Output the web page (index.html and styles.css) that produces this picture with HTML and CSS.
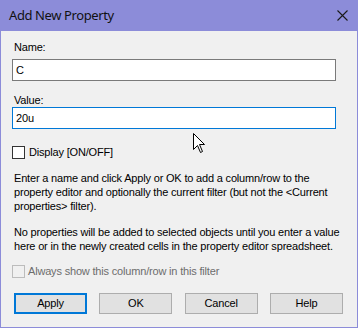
FILE: index.html
```html
<!DOCTYPE html>
<html>
<head>
<meta charset="utf-8">
<link rel="stylesheet" href="styles.css">
</head>
<body>
<div class="window">
  <div class="titlebar">
    <span class="title">Add New Property</span>
    <svg class="close" width="11" height="11" viewBox="0 0 11 11"><path d="M0.5 0.5 L10.5 10.5 M10.5 0.5 L0.5 10.5" stroke="#1a1a1a" stroke-width="1.1" fill="none"/></svg>
  </div>
  <div class="content">
    <div class="label">Name:</div>
    <div class="field">C</div>
    <div class="label value-label">Value:</div>
    <div class="field focused">20u</div>
    <div class="check-row display-row"><span class="box"></span><span class="check-text">Display [ON/OFF]</span></div>
    <p class="note first">Enter a name and click Apply or OK to add a column/row to the<br>property editor and optionally the current filter (but not the &lt;Current<br>properties&gt; filter).</p>
    <p class="note second">No properties will be added to selected objects until you enter a value<br>here or in the newly created cells in the property editor spreadsheet.</p>
    <div class="check-row disabled"><span class="box"></span><span class="check-text">Always show this column/row in this filter</span></div>
    <div class="buttons">
      <div class="btn default">Apply</div>
      <div class="btn">OK</div>
      <div class="btn">Cancel</div>
      <div class="btn">Help</div>
    </div>
  </div>
  <svg class="cursor" width="13" height="21" viewBox="0 0 13 21"><path d="M0.5 0.5 L0.5 16.5 L4.5 12.5 L7.5 19.5 L9.5 18.5 L6.5 11.5 L11.5 11.5 Z" fill="#fff" stroke="#000" stroke-width="1"/></svg>
</div>
</body>
</html>
```
FILE: styles.css
```css
* { box-sizing: border-box; }
html, body { margin: 0; padding: 0; }
body { width: 358px; height: 328px; overflow: hidden; background: #f0f0f0; }
.window {
  position: relative;
  width: 358px;
  height: 328px;
  background: #8c8cd9;
  display: flex;
  flex-direction: column;
  font-family: "Liberation Sans", Arial, sans-serif;
  font-size: 11px;
  letter-spacing: -0.18px;
  color: #000;
}
.titlebar {
  height: 31px;
  flex: none;
  display: flex;
  align-items: center;
  justify-content: space-between;
  padding: 0 10px 1px 9px;
}
.title {
  font-family: "Noto Sans", "Open Sans", sans-serif;
  font-size: 13px;
  color: #111;
  letter-spacing: -0.4px;
}
.close { display: block; margin-top: 1px; }
.content {
  flex: 1;
  margin: 0 1px 1px;
  background: #f0f0f0;
  padding: 9px 0 0 11px;
  display: flex;
  flex-direction: column;
  align-items: flex-start;
}
.label { line-height: 14px; margin-left: 2px; margin-bottom: 5px; }
.value-label { margin-top: 12px; margin-bottom: 0; }
.field {
  width: 324px;
  height: 22px;
  border: 1px solid #7a7a7a;
  background: #fff;
  padding: 0 3px;
  line-height: 20px;
}
.field.focused { border-color: #0078d7; }
.check-row { display: flex; align-items: flex-start; line-height: 14px; }
.display-row { margin-top: 16px; }
.box {
  width: 13px;
  height: 13px;
  margin-top: 1px;
  border: 1px solid #333;
  background: #fff;
  margin-right: 4px;
}
.note { margin: 12px 0 0 2px; line-height: 14px; white-space: nowrap; }
.note.second { margin-top: 12px; }
.disabled { margin-top: 11px; color: #6d6d6d; }
.disabled .box { border-color: #bcbcbc; background: #f0f0f0; margin-right: 3px; }
.buttons {
  margin: 15px 0 0 2px;
  width: 329px;
  display: flex;
  justify-content: space-between;
}
.btn {
  width: 73px;
  height: 21px;
  border: 1px solid #adadad;
  background: #e1e1e1;
  text-align: center;
  line-height: 19px;
}
.btn.default { border: 2px solid #0078d7; line-height: 17px; }
.cursor { position: absolute; left: 193px; top: 133px; }
```
